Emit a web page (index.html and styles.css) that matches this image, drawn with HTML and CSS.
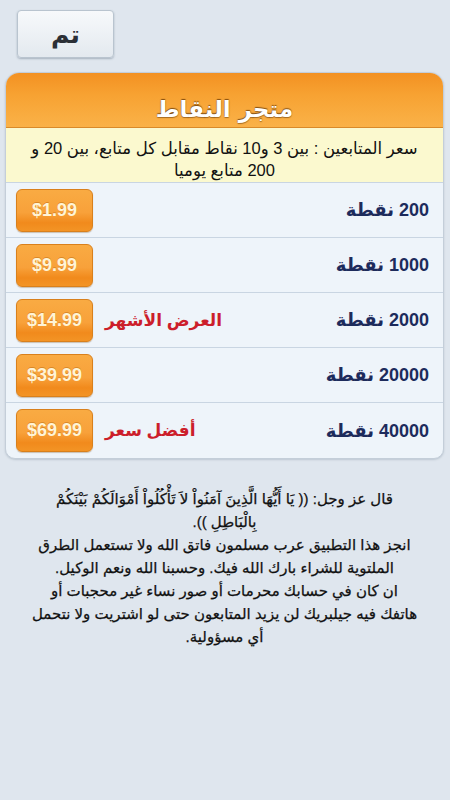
FILE: index.html
```html
<!DOCTYPE html>
<html lang="ar">
<head>
<meta charset="utf-8">
<link rel="stylesheet" href="styles.css">
</head>
<body>
<div class="page">
  <div class="topbar">
    <button class="done">تم</button>
  </div>
  <div class="card">
    <div class="card-head">متجر النقاط</div>
    <div class="info">سعر المتابعين : بين 3 و10 نقاط مقابل كل متابع، بين 20 و<br>200 متابع يوميا</div>
    <div class="row">
      <span class="price">$1.99</span>
      <span class="tag"></span>
      <span class="points">200 نقطة</span>
    </div>
    <div class="row">
      <span class="price">$9.99</span>
      <span class="tag"></span>
      <span class="points">1000 نقطة</span>
    </div>
    <div class="row">
      <span class="price">$14.99</span>
      <span class="tag">العرض الأشهر</span>
      <span class="points">2000 نقطة</span>
    </div>
    <div class="row">
      <span class="price">$39.99</span>
      <span class="tag"></span>
      <span class="points">20000 نقطة</span>
    </div>
    <div class="row last">
      <span class="price">$69.99</span>
      <span class="tag">أفضل سعر</span>
      <span class="points">40000 نقطة</span>
    </div>
  </div>
  <p class="note">قال عز وجل: (( يَا أَيُّهَا الَّذِينَ آمَنُواْ لاَ تَأْكُلُواْ أَمْوَالَكُمْ بَيْنَكُمْ<br>بِالْبَاطِلِ )).<br>انجز هذا التطبيق عرب مسلمون فاتق الله ولا تستعمل الطرق<br>الملتوية للشراء بارك الله فيك. وحسبنا الله ونعم الوكيل.<br>ان كان في حسابك محرمات أو صور نساء غير محجبات أو<br>هاتفك فيه جيلبريك لن يزيد المتابعون حتى لو اشتريت ولا نتحمل<br>أي مسؤولية.</p>
</div>
</body>
</html>
```
FILE: styles.css
```css
html, body {
  margin: 0;
  padding: 0;
  background: #dfe6ee;
}
body {
  width: 450px;
  height: 800px;
  overflow: hidden;
  font-family: "Liberation Sans", "DejaVu Sans", sans-serif;
}
.page {
  padding: 10px 6px 0 5px;
}
.topbar {
  display: flex;
  padding-left: 12px;
  height: 48px;
}
.done {
  width: 97px;
  height: 48px;
  border: 1px solid #b9c4cf;
  border-radius: 4px;
  background: linear-gradient(#f7f9fb, #e3e9ef);
  box-shadow: 0 1px 2px rgba(60, 80, 100, 0.35);
  font-family: "DejaVu Sans", sans-serif;
  font-weight: bold;
  font-size: 25px;
  color: #2b2f36;
  padding: 0;
  line-height: 48px;
}
.card {
  margin-top: 14px;
  border: 1px solid #c4ced9;
  border-radius: 14px 14px 10px 10px;
  overflow: hidden;
  background: #eef4fa;
  box-shadow: 0 1px 2px rgba(90, 110, 130, 0.25);
}
.card-head {
  height: 55px;
  box-sizing: border-box;
  padding-top: 22px;
  text-align: center;
  background: linear-gradient(#f39122 0%, #f7a232 40%, #fab248 100%);
  border-bottom: 1px solid #d98a2a;
  color: #fff;
  font-family: "DejaVu Sans", sans-serif;
  font-weight: bold;
  font-size: 23px;
  line-height: 28px;
  text-shadow: 0 -1px 1px rgba(80, 40, 0, 0.7), 0 1px 1px rgba(80, 40, 0, 0.5);
  direction: rtl;
}
.info {
  height: 55px;
  box-sizing: border-box;
  padding-top: 9px;
  background: #fbf9cf;
  border-bottom: 1px solid #c9d5e2;
  text-align: center;
  direction: rtl;
  font-size: 16.5px;
  line-height: 22px;
  color: #111;
}
.row {
  display: flex;
  align-items: center;
  height: 54px;
  padding: 0 14px 0 10px;
  border-bottom: 1px solid #c9d5e2;
  gap: 12px;
}
.row.last {
  border-bottom: none;
  height: 55px;
}
.price {
  width: 77px;
  height: 43px;
  box-sizing: border-box;
  border: 1px solid #d9801c;
  border-radius: 6px;
  background: linear-gradient(#f9ab43 0%, #f8a13a 55%, #f18a1c 80%, #f39425 100%);
  box-shadow: 0 1px 1px rgba(120, 70, 10, 0.3);
  color: #fff4d6;
  font-weight: bold;
  font-size: 18px;
  display: flex;
  align-items: center;
  justify-content: center;
  text-shadow: 0 -1px 0 rgba(160, 80, 0, 0.35);
}
.tag {
  color: #cc1e2b;
  font-weight: bold;
  font-size: 17px;
  direction: rtl;
}
.points {
  margin-left: auto;
  color: #1d2b5c;
  font-weight: bold;
  font-size: 18px;
  direction: rtl;
}
.note {
  margin: 28px 0 0;
  padding: 0 4px;
  direction: rtl;
  text-align: center;
  font-size: 15px;
  line-height: 23px;
  color: #111;
  -webkit-text-stroke: 0.25px #111;
}
```
